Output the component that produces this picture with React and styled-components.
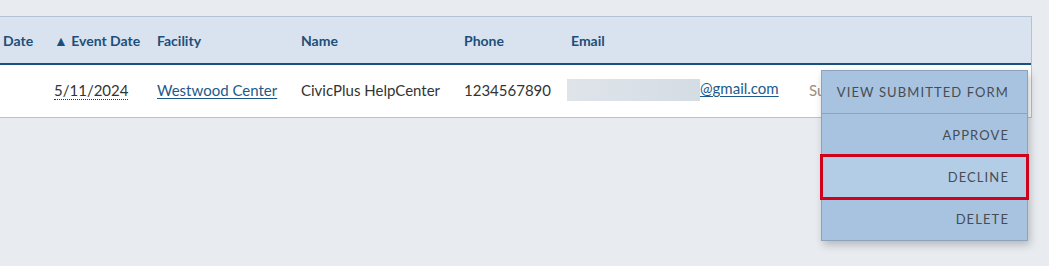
import React from 'react';
import styled, { createGlobalStyle } from 'styled-components';

const Global = createGlobalStyle`
  html, body {
    margin: 0;
    padding: 0;
    background: #e8ecf1;
    font-family: Lato, "Open Sans", sans-serif;
  }
`;

const styles = {
  Page: styled.div`
    position: relative;
    width: 1049px;
    height: 266px;
    padding-top: 16px;
    box-sizing: border-box;
    overflow: hidden;
  `,
  Frame: styled.div`
    width: 1031px;
    border: 1px solid #b3c2d4;
    border-left: 0;
    background: #fff;
  `,
  Table: styled.table`
    border-collapse: collapse;
    width: 100%;
    table-layout: fixed;
  `,
  Head: styled.thead`
    background: #d9e3ef;
    border-bottom: 2px solid #1a527f;
  `,
  Th: styled.th`
    height: 46px;
    padding: 0 0 0 ${p => p.pad || 0}px;
    text-align: left;
    font-size: 14px;
    font-weight: 700;
    color: #1d4f7a;
    white-space: nowrap;
    width: ${p => p.w ? p.w + 'px' : 'auto'};
  `,
  Td: styled.td`
    height: 50px;
    padding: 0 0 2px;
    font-size: 15px;
    color: #333;
    white-space: nowrap;
  `,
  Dotted: styled.span`
    border-bottom: 1px dotted #333;
  `,
  Link: styled.a`
    color: #1d5a8a;
    text-decoration: underline;
    text-underline-offset: 2px;
  `,
  Redacted: styled.span`
    display: inline-block;
    width: 133px;
    height: 22px;
    margin-left: -4px;
    vertical-align: middle;
    background: linear-gradient(90deg, #dfe4ea, #d4dce4);
  `,
  Status: styled.span`
    color: #9a8e82;
  `,
  Menu: styled.ul`
    position: absolute;
    top: 70px;
    left: 821px;
    width: 205px;
    margin: 0;
    padding: 0;
    list-style: none;
    background: #a7c3e0;
    border: 1px solid #8ea3bb;
    box-shadow: 2px 4px 8px rgba(0, 0, 0, 0.22);
  `,
  Item: styled.li`
    height: 42px;
    display: flex;
    align-items: center;
    justify-content: flex-end;
    padding-right: 18px;
    font-size: 13px;
    letter-spacing: 1.1px;
    text-transform: uppercase;
    color: #474c53;
    border-bottom: ${p => p.divider ? '1px solid #8ea3bb' : '0'};
    background: ${p => p.focused ? '#b3cde6' : 'transparent'};
    outline: ${p => p.focused ? '3px solid #d0021b' : 'none'};
    outline-offset: -1px;
    position: relative;
  `,
};

export default function App() {
  return (
    <>
      <Global />
      <styles.Page>
        <styles.Frame>
          <styles.Table>
            <styles.Head>
              <tr>
                <styles.Th w={51} pad={3}>Date</styles.Th>
                <styles.Th w={103}>▲ Event Date</styles.Th>
                <styles.Th w={144}>Facility</styles.Th>
                <styles.Th w={163}>Name</styles.Th>
                <styles.Th w={107}>Phone</styles.Th>
                <styles.Th w={238}>Email</styles.Th>
                <styles.Th></styles.Th>
              </tr>
            </styles.Head>
            <tbody>
              <tr>
                <styles.Td></styles.Td>
                <styles.Td><styles.Dotted>5/11/2024</styles.Dotted></styles.Td>
                <styles.Td><styles.Link href="#">Westwood Center</styles.Link></styles.Td>
                <styles.Td>CivicPlus HelpCenter</styles.Td>
                <styles.Td>1234567890</styles.Td>
                <styles.Td><styles.Redacted /><styles.Link href="#">@gmail.com</styles.Link></styles.Td>
                <styles.Td><styles.Status>Submitted</styles.Status></styles.Td>
              </tr>
            </tbody>
          </styles.Table>
        </styles.Frame>
        <styles.Menu>
          <styles.Item divider>View Submitted Form</styles.Item>
          <styles.Item>Approve</styles.Item>
          <styles.Item focused>Decline</styles.Item>
          <styles.Item>Delete</styles.Item>
        </styles.Menu>
      </styles.Page>
    </>
  );
}
